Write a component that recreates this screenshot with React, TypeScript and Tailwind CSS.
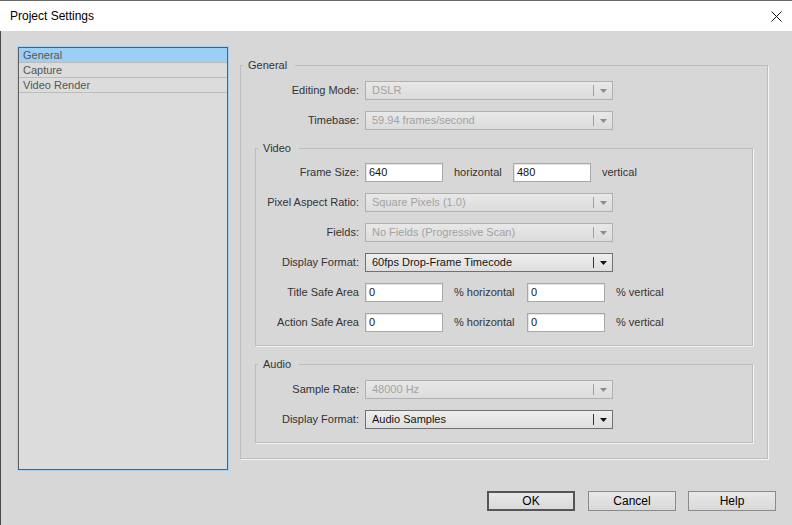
import clsx from 'clsx';

function Arrow({ dark }: { dark?: boolean }) {
  return (
    <svg width="7" height="4" viewBox="0 0 7 4">
      <path d="M0 0H7L3.5 4Z" fill={dark ? '#111' : '#8c8c8c'} />
    </svg>
  );
}

function Select({ value, disabled }: { value: string; disabled?: boolean }) {
  return (
    <div
      className={clsx(
        'flex h-[19px] w-[248px] items-center border pl-[6px]',
        disabled
          ? 'border-[#b0b0b0] bg-gradient-to-b from-[#e8e8e8] to-[#dcdcdc] text-[#a2a2a2]'
          : 'border-[#707070] bg-gradient-to-b from-[#eeeeee] to-[#dedede] text-[#141414]'
      )}
    >
      <span className="flex-1 truncate">{value}</span>
      <span className={clsx('h-[11px] w-px', disabled ? 'bg-[#a0a0a0]' : 'bg-[#333]')} />
      <span className="flex w-[18px] justify-center">
        <Arrow dark={!disabled} />
      </span>
    </div>
  );
}

function Field({ value }: { value: string }) {
  return (
    <div className="flex h-[19px] w-[78px] items-center border border-[#a8a8a8] bg-white pl-[3px] text-[#141414] shadow-[inset_1px_1px_0_#e4e4e4]">
      {value}
    </div>
  );
}

function Row({ label, w, children }: { label: string; w: string; children: React.ReactNode }) {
  return (
    <div className="flex h-[19px] items-center gap-[6px]">
      <span className={clsx('text-right text-[#333]', w)}>{label}</span>
      {children}
    </div>
  );
}

function Group({ title, className, children }: { title: string; className?: string; children: React.ReactNode }) {
  return (
    <fieldset className={clsx('m-0 min-w-0 border border-[#bdbdbd] p-0 shadow-[1px_1px_0_#f4f4f4]', className)}>
      <legend className="ml-[2px] pl-[5px] pr-[8px] leading-[14px] text-[#333]">{title}</legend>
      {children}
    </fieldset>
  );
}

export default function App() {
  const items = ['General', 'Capture', 'Video Render'];
  return (
    <div className="flex h-[525px] w-[792px] flex-col overflow-hidden border-t border-[#6a6a6a] bg-[#d7d7d7] font-['Liberation_Sans',Arial,sans-serif] text-[11px]">
      {/* title bar */}
      <div className="flex h-[30px] shrink-0 items-center justify-between bg-white pl-[10px] pr-[9px]">
        <span className="text-[12px] text-black">Project Settings</span>
        <svg width="11" height="11" viewBox="0 0 11 11" className="mr-[1px]">
          <path d="M0.5 0.5L10.5 10.5M10.5 0.5L0.5 10.5" stroke="#111" strokeWidth="1" />
        </svg>
      </div>

      <div className="flex flex-1 flex-col border-l border-[#4a4a4a]">
        <div className="flex items-start gap-[12px] pl-[17px] pt-[16px]">
          {/* category list */}
          <div className="h-[423px] w-[210px] border border-[#5e5e5e] bg-[#dcdcdc] shadow-[0_0_0_1px_#a8d0f0]">
            {items.map((it, i) => (
              <div
                key={it}
                className={clsx(
                  'h-[15px] border-b border-[#bcbcbc] pl-[4px] leading-[14px] text-[#555]',
                  i === 0 && 'bg-[#9dcff5]'
                )}
              >
                {it}
              </div>
            ))}
          </div>

          {/* general settings */}
          <Group title="General" className="mt-[11px] w-[528px]">
            <div className="flex flex-col px-[14px] pb-[15px] pt-[9px]">
              <Row label="Editing Mode:" w="w-[104px]">
                <Select value="DSLR" disabled />
              </Row>
              <div className="mt-[11px]">
                <Row label="Timebase:" w="w-[104px]">
                  <Select value="59.94 frames/second" disabled />
                </Row>
              </div>

              <Group title="Video" className="mt-[11px]">
                <div className="flex flex-col gap-[11px] pb-[13px] pt-[8px]">
                  <Row label="Frame Size:" w="w-[103px]">
                    <Field value="640" />
                    <span className="ml-[5px] w-[53px] text-[#333]">horizontal</span>
                    <Field value="480" />
                    <span className="ml-[5px] text-[#333]">vertical</span>
                  </Row>
                  <Row label="Pixel Aspect Ratio:" w="w-[103px]">
                    <Select value="Square Pixels (1.0)" disabled />
                  </Row>
                  <Row label="Fields:" w="w-[103px]">
                    <Select value="No Fields (Progressive Scan)" disabled />
                  </Row>
                  <Row label="Display Format:" w="w-[103px]">
                    <Select value="60fps Drop-Frame Timecode" />
                  </Row>
                  <Row label="Title Safe Area" w="w-[103px]">
                    <Field value="0" />
                    <span className="ml-[5px] w-[67px] text-[#333]">% horizontal</span>
                    <Field value="0" />
                    <span className="ml-[5px] text-[#333]">% vertical</span>
                  </Row>
                  <Row label="Action Safe Area" w="w-[103px]">
                    <Field value="0" />
                    <span className="ml-[5px] w-[67px] text-[#333]">% horizontal</span>
                    <Field value="0" />
                    <span className="ml-[5px] text-[#333]">% vertical</span>
                  </Row>
                </div>
              </Group>

              <Group title="Audio" className="mt-[11px]">
                <div className="flex flex-col gap-[11px] pb-[13px] pt-[9px]">
                  <Row label="Sample Rate:" w="w-[103px]">
                    <Select value="48000 Hz" disabled />
                  </Row>
                  <Row label="Display Format:" w="w-[103px]">
                    <Select value="Audio Samples" />
                  </Row>
                </div>
              </Group>
            </div>
          </Group>
        </div>

        {/* buttons */}
        <div className="mt-[21px] flex justify-end gap-[12px] pr-[16px]">
          <button className="mr-[1px] h-[20px] w-[88px] border-2 border-[#555] bg-gradient-to-b from-[#e8e8e8] to-[#d9d9d9] text-[12px] leading-none text-black">
            OK
          </button>
          <button className="h-[20px] w-[88px] border border-[#8a8a8a] bg-gradient-to-b from-[#e8e8e8] to-[#d9d9d9] text-[12px] leading-none text-black">
            Cancel
          </button>
          <button className="h-[20px] w-[88px] border border-[#8a8a8a] bg-gradient-to-b from-[#e8e8e8] to-[#d9d9d9] text-[12px] leading-none text-black">
            Help
          </button>
        </div>
      </div>
    </div>
  );
}
